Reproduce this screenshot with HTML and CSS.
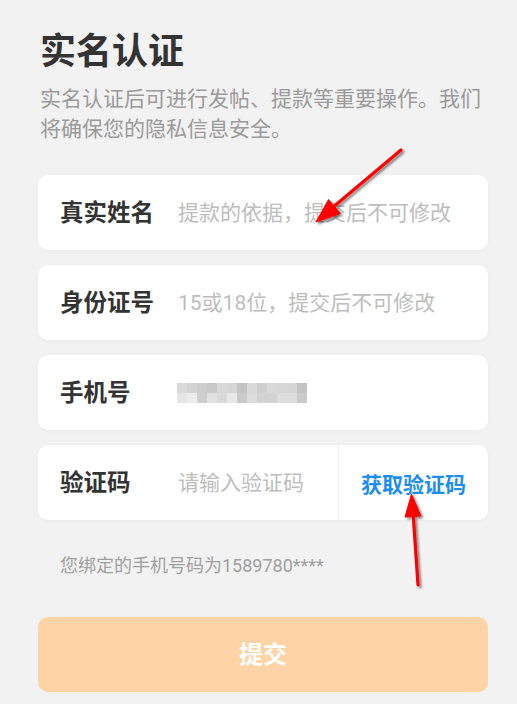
FILE: index.html
```html
<!DOCTYPE html>
<html lang="zh-CN">
<head>
<meta charset="utf-8">
<title>实名认证</title>
<link rel="stylesheet" href="styles.css">
</head>
<body>
<main class="page">
  <header class="intro">
    <h1 class="title">实名认证</h1>
    <p class="desc">实名认证后可进行发帖、提款等重要操作。我们将确保您的隐私信息安全。</p>
  </header>

  <section class="form">
    <div class="card">
      <span class="label">真实姓名</span>
      <span class="placeholder">提款的依据，提交后不可修改</span>
    </div>
    <div class="card">
      <span class="label">身份证号</span>
      <span class="placeholder">15或18位，提交后不可修改</span>
    </div>
    <div class="card">
      <span class="label">手机号</span>
      <svg class="mosaic" width="130" height="20" viewBox="0 0 130 20">
        <rect x="0" y="0" width="10" height="10" fill="#d9d9d9"/>
        <rect x="10" y="0" width="10" height="10" fill="#d3d3d3"/>
        <rect x="20" y="0" width="10" height="10" fill="#cdcdcd"/>
        <rect x="30" y="0" width="10" height="10" fill="#c9c9c9"/>
        <rect x="40" y="0" width="10" height="10" fill="#d9d9d9"/>
        <rect x="50" y="0" width="10" height="10" fill="#d6d6d6"/>
        <rect x="60" y="0" width="10" height="10" fill="#c4c4c4"/>
        <rect x="70" y="0" width="10" height="10" fill="#dadada"/>
        <rect x="80" y="0" width="10" height="10" fill="#cfcfcf"/>
        <rect x="90" y="0" width="10" height="10" fill="#d9d9d9"/>
        <rect x="100" y="0" width="10" height="10" fill="#d7d7d7"/>
        <rect x="110" y="0" width="10" height="10" fill="#d6d6d6"/>
        <rect x="120" y="0" width="10" height="10" fill="#c4c4c4"/>
        <rect x="0" y="10" width="10" height="10" fill="#e6e6e6"/>
        <rect x="10" y="10" width="10" height="10" fill="#ececec"/>
        <rect x="20" y="10" width="10" height="10" fill="#cecece"/>
        <rect x="30" y="10" width="10" height="10" fill="#e1e1e1"/>
        <rect x="40" y="10" width="10" height="10" fill="#d9d9d9"/>
        <rect x="50" y="10" width="10" height="10" fill="#e8e8e8"/>
        <rect x="60" y="10" width="10" height="10" fill="#c9c9c9"/>
        <rect x="70" y="10" width="10" height="10" fill="#dcdcdc"/>
        <rect x="80" y="10" width="10" height="10" fill="#d3d3d3"/>
        <rect x="90" y="10" width="10" height="10" fill="#d3d3d3"/>
        <rect x="100" y="10" width="10" height="10" fill="#dddddd"/>
        <rect x="110" y="10" width="10" height="10" fill="#dddddd"/>
        <rect x="120" y="10" width="10" height="10" fill="#cbcbcb"/>
      </svg>
    </div>
    <div class="card card-code">
      <span class="label">验证码</span>
      <span class="placeholder grow">请输入验证码</span>
      <span class="get-code">获取验证码</span>
    </div>
  </section>

  <p class="hint">您绑定的手机号码为1589780****</p>

  <button class="submit" type="button">提交</button>
</main>

<svg class="annot" width="517" height="704" viewBox="0 0 517 704">
  <defs>
    <filter id="sh" x="-20%" y="-20%" width="140%" height="140%">
      <feDropShadow dx="2" dy="2" stdDeviation="1.3" flood-color="#000" flood-opacity="0.45"/>
    </filter>
  </defs>
  <g filter="url(#sh)" fill="#ff0000" stroke="#ff0000">
    <line x1="401" y1="150" x2="332" y2="208" stroke-width="3.2" stroke-linecap="round"/>
    <polygon points="316,222 340.5,213.5 328.5,199.5" stroke-width="1" stroke-linejoin="round"/>
    <line x1="418" y1="585" x2="413" y2="512" stroke-width="3.2" stroke-linecap="round"/>
    <polygon points="411.5,494 421,516 405,517" stroke-width="1" stroke-linejoin="round"/>
  </g>
</svg>
</body>
</html>
```

FILE: styles.css
```css
* {
  box-sizing: border-box;
}

html, body {
  margin: 0;
  padding: 0;
}

body {
  background: #f2f2f2;
  font-family: "Roboto", "Noto Sans CJK SC", sans-serif;
  color: #333333;
  width: 517px;
  height: 704px;
  overflow: hidden;
  position: relative;
}

.page {
  width: 450px;
  margin-left: 38px;
  padding-top: 30px;
  display: flex;
  flex-direction: column;
}

.intro {
  padding-left: 2px;
}

.title {
  margin: 0;
  font-size: 36px;
  line-height: 44px;
  font-weight: 700;
  color: #333333;
}

.desc {
  margin: 10px 0 0;
  font-size: 21px;
  line-height: 30px;
  color: #9a9a9a;
}

.form {
  margin-top: 31px;
  display: flex;
  flex-direction: column;
  gap: 15px;
}

.card {
  height: 75px;
  background: #ffffff;
  border-radius: 10px;
  box-shadow: 0 1px 4px rgba(0, 0, 0, 0.035);
  display: flex;
  align-items: center;
  padding-left: 22px;
}

.label {
  width: 118px;
  flex: none;
  font-size: 23.5px;
  font-weight: 700;
  color: #333333;
  line-height: 30px;
}

.placeholder {
  font-size: 21px;
  line-height: 30px;
  color: #bdbdbd;
}

.grow {
  flex: 1;
}

.mosaic {
  display: block;
  margin-left: -1px;
}

.card-code {
  align-items: stretch;
}

.card-code .label,
.card-code .placeholder {
  align-self: center;
}

.get-code {
  flex: none;
  display: flex;
  align-items: center;
  padding: 0 22px 0 22px;
  border-left: 1px solid #f0f0f0;
  font-size: 21px;
  font-weight: 700;
  color: #1b8ef0;
}

.hint {
  margin: 32px 0 0;
  padding-left: 22px;
  font-size: 18px;
  line-height: 28px;
  color: #a0a0a0;
}

.submit {
  margin-top: 37px;
  height: 75px;
  width: 100%;
  border: none;
  border-radius: 10px;
  background: #fed3a6;
  color: #ffffff;
  font-family: "Roboto", "Noto Sans CJK SC", sans-serif;
  font-size: 24px;
  font-weight: 700;
  padding: 0 0 4px;
}

.annot {
  position: absolute;
  left: 0;
  top: 0;
  pointer-events: none;
}
```
